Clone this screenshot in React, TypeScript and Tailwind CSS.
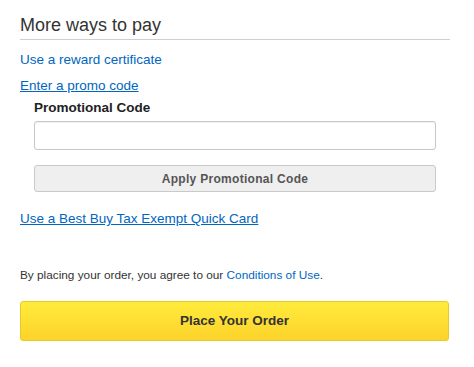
const App = () => {
  return (
    <div className="w-[474px] h-[367px] bg-white font-['Liberation_Sans',Arial,sans-serif] text-[#333] pl-5 pr-6">
      <div className="pt-[13px]">
        <h2 className="text-[18px] leading-[24px] text-[#333]">More ways to pay</h2>
        <div className="mt-[2px] h-px w-[430px] bg-[#cfcfcf]"></div>
      </div>

      <div className="mt-[11px] text-[13.5px] leading-[18px] text-[#0066c0]">Use a reward certificate</div>
      <div className="mt-[8px] text-[13.5px] leading-[18px] text-[#0066c0] underline">Enter a promo code</div>

      <div className="pl-[14px] w-[416px]">
        <div className="mt-[4px] text-[13.5px] leading-[18px] font-bold text-[#222]">Promotional Code</div>
        <input type="text" className="mt-[4px] block w-[402px] h-[29px] rounded-[3px] border border-[#c7c7c7] shadow-[inset_0_1px_1px_rgba(0,0,0,0.06)] bg-white" />
        <button type="button" className="mt-[15px] block w-[402px] h-[27px] rounded-[3px] border border-[#c9c9c9] bg-[#efefef] text-[12px] font-bold text-[#555] tracking-[0.3px]">
          Apply Promotional Code
        </button>
      </div>

      <div className="mt-[18px] text-[13.5px] leading-[18px] text-[#0066c0] underline">Use a Best Buy Tax Exempt Quick Card</div>

      <div className="mt-[39px] text-[11.8px] leading-[16px] text-[#333]">
        By placing your order, you agree to our <span className="text-[#0066c0]">Conditions of Use</span>.
      </div>

      <button type="button" className="mt-[18px] block w-[429px] h-[40px] rounded-[3px] border border-[#e8c92a] bg-gradient-to-b from-[#ffeb3b] to-[#fdd32a] text-[13.5px] font-bold text-[#333]">
        Place Your Order
      </button>
    </div>
  );
};

export default App;
